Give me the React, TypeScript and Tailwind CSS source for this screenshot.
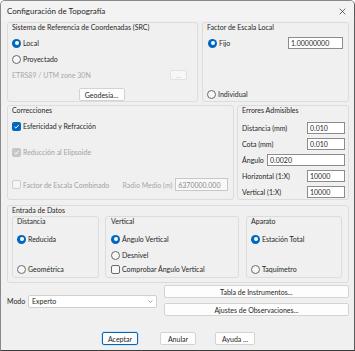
import React from 'react';

const Radio: React.FC<{ checked?: boolean; label: string }> = ({ checked, label }) => (
  <div className="flex items-center gap-[2px] h-[10px]">
    {checked ? (
      <span className="w-[9px] h-[9px] rounded-full bg-[#0067c0] flex items-center justify-center shrink-0">
        <span className="w-[4px] h-[4px] rounded-full bg-white" />
      </span>
    ) : (
      <span className="w-[9px] h-[9px] rounded-full border border-[#6a6a6a] bg-[#f7f7f7] shrink-0" />
    )}
    <span className="leading-[10px]">{label}</span>
  </div>
);

const Check: React.FC<{ checked?: boolean; disabled?: boolean; label: string }> = ({ checked, disabled, label }) => {
  let box = 'border border-[#6a6a6a] bg-[#f7f7f7]';
  if (checked && !disabled) box = 'bg-[#0067c0]';
  if (checked && disabled) box = 'bg-[#c6c6c6]';
  if (!checked && disabled) box = 'border border-[#cfcfcf] bg-[#f5f5f5]';
  return (
    <div className="flex items-center gap-[2px] h-[10px]">
      <span className={`w-[9px] h-[9px] rounded-[2px] flex items-center justify-center shrink-0 ${box}`}>
        {checked && (
          <svg viewBox="0 0 10 10" className="w-[7px] h-[7px]">
            <path d="M2 5.2 L4.2 7.3 L8.2 2.8" fill="none" stroke="white" strokeWidth="1.4" />
          </svg>
        )}
      </span>
      <span className={`leading-[10px] ${disabled ? 'text-[#a2a2a2]' : ''}`}>{label}</span>
    </div>
  );
};

const Field: React.FC<{ value: string; className?: string; disabled?: boolean }> = ({ value, className = '', disabled }) => (
  <div
    className={`h-[12px] px-[2px] flex items-center leading-[10px] border ${
      disabled ? 'border-[#c8c8c8] bg-[#f8f8f8] text-[#8a8a8a]' : 'border-[#8c8c8c] bg-white'
    } ${className}`}
  >
    {value}
  </div>
);

const Btn: React.FC<{ label: string; className?: string; primary?: boolean }> = ({ label, className = '', primary }) => (
  <div
    className={`h-[13px] flex items-center justify-center leading-[10px] rounded-[2px] bg-[#fdfdfd] border ${
      primary ? 'border-[#0067c0] shadow-[0_0_0_1px_#cfe3f5]' : 'border-[#d3d3d3]'
    } ${className}`}
  >
    {label}
  </div>
);

const Group: React.FC<{ title: string; className?: string; children?: React.ReactNode }> = ({ title, className = '', children }) => (
  <div className={`border border-[#dcdcdc] rounded-[3px] flex flex-col ${className}`}>
    <div className="leading-[9px]">{title}</div>
    {children}
  </div>
);

export default function App() {
  return (
    <div className="w-[355px] h-[351px] bg-[#f0f0f0] text-[#262626] border border-[#8a8a8a] border-b-[#3c3c3c] border-r-[#5a5a5a] rounded-t-[5px] flex flex-col overflow-hidden font-['Lato',sans-serif] text-[7px]">
      {/* title bar */}
      <div className="h-[20px] shrink-0 flex items-center justify-between pl-[6px] pr-[8px] bg-[#f3f3f3]">
        <span className="text-[8px]">Configuración de Topografía</span>
        <svg viewBox="0 0 10 10" className="w-[7px] h-[7px]">
          <path d="M1 1 L9 9 M9 1 L1 9" stroke="#333" strokeWidth="1" />
        </svg>
      </div>

      <div className="flex flex-col pl-[6px] pr-[5px] pt-[1px]">
        {/* row 1 */}
        <div className="flex gap-[4px] h-[80px]">
          <Group title="Sistema de Referencia de Coordenadas (SRC)" className="w-[191px] pl-[4px] pr-[10px]">
            <div className="mt-[6px]"><Radio checked label="Local" /></div>
            <div className="mt-[6px]"><Radio label="Proyectado" /></div>
            <div className="mt-[6px] flex items-center justify-between h-[10px]">
              <span className="text-[#a8a8a8] leading-[10px]">ETRS89 / UTM zone 30N</span>
              <div className="w-[17px] h-[10px] border border-[#e2e2e2] bg-[#f7f7f7] rounded-[2px] flex items-center justify-center text-[#c4c4c4] leading-[6px]">...</div>
            </div>
            <div className="mt-[8px] flex justify-center pl-[4px]">
              <Btn label="Geodesia..." className="w-[46px] h-[12px]" />
            </div>
          </Group>
          <Group title="Factor de Escala Local" className="w-[147px] pl-[4px] pr-[5px] pb-[2px]">
            <div className="mt-[5px] flex items-center justify-between pl-[1px]">
              <Radio checked label="Fijo" />
              <Field value="1.00000000" className="w-[55px]" />
            </div>
            <div className="mt-auto"><Radio label="Individual" /></div>
          </Group>
        </div>

        {/* row 2 */}
        <div className="flex gap-[3px] h-[95px] mt-[3px]">
          <Group title="Correcciones" className="w-[227px] pl-[4px] pr-[5px]">
            <div className="mt-[6px]"><Check checked label="Esfericidad y Refracción" /></div>
            <div className="mt-[16px]"><Check checked disabled label="Reducción al Elipsoide" /></div>
            <div className="mt-[21px] flex items-center">
              <div className="w-[111px]"><Check disabled label="Factor de Escala Combinado" /></div>
              <span className="text-[#a8a8a8] leading-[10px] w-[53px]">Radio Medio (m)</span>
              <Field value="6370000.000" disabled className="w-[53px] h-[13px]" />
            </div>
          </Group>
          <Group title="Errores Admisibles" className="w-[112px] pl-[4px] pr-[3px]">
            <div className="mt-[7px] flex flex-col gap-[4px]">
              <div className="flex items-center justify-between">
                <span className="leading-[10px]">Distancia (mm)</span>
                <Field value="0.010" className="w-[38px]" />
              </div>
              <div className="flex items-center justify-between">
                <span className="leading-[10px]">Cota (mm)</span>
                <Field value="0.010" className="w-[38px]" />
              </div>
              <div className="flex items-center justify-between">
                <span className="leading-[10px]">Ángulo</span>
                <Field value="0.0020" className="w-[78px]" />
              </div>
              <div className="flex items-center justify-between">
                <span className="leading-[10px]">Horizontal (1:X)</span>
                <Field value="10000" className="w-[38px]" />
              </div>
              <div className="flex items-center justify-between">
                <span className="leading-[10px]">Vertical (1:X)</span>
                <Field value="10000" className="w-[38px]" />
              </div>
            </div>
          </Group>
        </div>

        {/* row 3 */}
        <Group title="Entrada de Datos" className="h-[78px] mt-[5px] pl-[4px] pr-[5px]">
          <div className="flex mt-[1px] h-[62px]">
            <Group title="Distancia" className="w-[87px] pl-[4px]">
              <div className="mt-[8px]"><Radio checked label="Reducida" /></div>
              <div className="mt-[20px]"><Radio label="Geométrica" /></div>
            </Group>
            <Group title="Vertical" className="w-[134px] ml-[6px] pl-[5px]">
              <div className="mt-[8px]"><Radio checked label="Ángulo Vertical" /></div>
              <div className="mt-[6px]"><Radio label="Desnivel" /></div>
              <div className="mt-[4px]"><Check label="Comprobar Ángulo Vertical" /></div>
            </Group>
            <Group title="Aparato" className="w-[96px] ml-[7px] pl-[4px]">
              <div className="mt-[8px]"><Radio checked label="Estación Total" /></div>
              <div className="mt-[20px]"><Radio label="Taquímetro" /></div>
            </Group>
          </div>
        </Group>

        {/* row 4 */}
        <div className="flex mt-[2px]">
          <div className="w-[153px] flex items-center h-[14px] self-start mt-[9px]">
            <span className="w-[21px] leading-[10px]">Modo</span>
            <div className="flex-1 h-[13px] bg-white border border-[#d0d0d0] rounded-[2px] flex items-center justify-between pl-[3px] pr-[3px]">
              <span className="leading-[10px]">Experto</span>
              <svg viewBox="0 0 10 6" className="w-[5px] h-[3px]">
                <path d="M1 1 L5 5 L9 1" fill="none" stroke="#666" strokeWidth="1.2" />
              </svg>
            </div>
          </div>
          <div className="ml-[7px] w-[189px] flex flex-col gap-[5px]">
            <Btn label="Tabla de Instrumentos..." />
            <Btn label="Ajustes de Observaciones..." />
          </div>
        </div>

        {/* row 5 */}
        <div className="flex mt-[16px] pl-[95px]">
          <Btn label="Aceptar" primary className="w-[36px]" />
          <Btn label="Anular" className="w-[36px] ml-[22px]" />
          <Btn label="Ayuda ..." className="w-[40px] ml-[19px]" />
        </div>
      </div>
    </div>
  );
}
